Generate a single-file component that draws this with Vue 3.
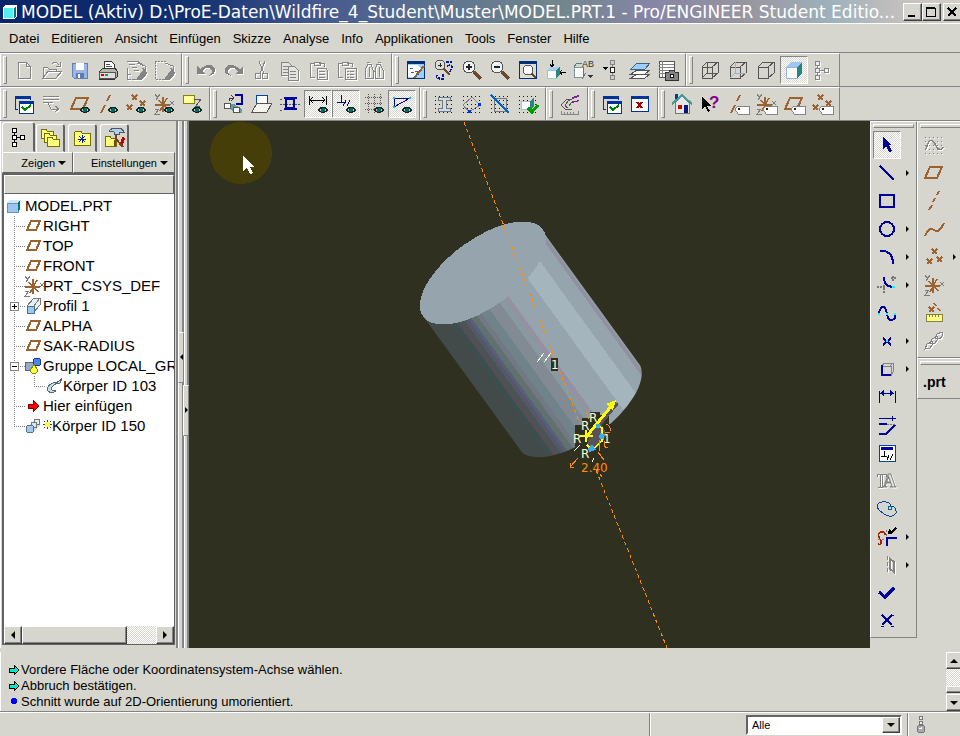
<script setup>

import { ref } from 'vue'

const filter = ref('Alle')

const menus = ['Datei', 'Editieren', 'Ansicht', 'Einfügen', 'Skizze', 'Analyse', 'Info', 'Applikationen', 'Tools', 'Fenster', 'Hilfe']

// parts shared by several icons
const eye = '<path d="M11 18q6-7 12 0q-6 6-12 0z" fill="#182020"/><path d="M13 18q4-3 8 0q-4 2-8 0z" fill="#a5cece"/><circle cx="17" cy="18" r="2" fill="#006b63"/>'
const tag = '<path d="M9 17l3-3h11v8H12z" fill="#fff" stroke="#848484"/><path d="M12 17h2" stroke="#222" stroke-width="2"/>'
const plane = '<path d="M3 17L8 6h12l-5 11z" stroke="#9c6331" stroke-width="2"/>'
const dash = '<path d="M5 21l4-8M11 9l3-6" stroke="#9c6331" stroke-width="2"/>'
const crosses = '<path d="M8 3l5 5m0-5l-5 5M3 13l5 5m0-5l-5 5M16 9l5 5m0-5l-5 5" stroke="#9c6331" stroke-width="1.5"/>'
const letters = '<g stroke="#7b7b7b"><path d="M3 2l3 4M8 2L4 8M18 9l4 4m0-4l-4 4M3 17h4l-4 5h5"/></g>'
const csys = '<path d="M3 13h15M11 5v15M7 8l9 10M15 6L8 19" stroke="#9c6331" stroke-width="1.5"/>' + letters
const dots = '<path d="M3 4h18M3 8h18M3 12h18M3 16h18M3 20h18" stroke="#00009c" stroke-dasharray="1 3"/>'
const cubeLines = '<path d="M4 9h10v11H4zM4 9l5-5h11v11l-6 5M14 9l6-5" stroke="#555"/>'
const win = '<path d="M3 4h15v4M3 4v13h3" stroke="#00319c"/><path d="M3 5h15" stroke="#00319c" stroke-width="3"/><path d="M7 9h14v12H7z" fill="#fff" stroke="#00319c"/><path d="M7 10h14" stroke="#00319c" stroke-width="3"/>'
const loupe = '<path d="M14 14l7 7" stroke="#6b4a29" stroke-width="3"/><circle cx="9" cy="9" r="6" fill="#eef4f4" stroke="#555"/>'
const pages = '<path d="M3 4h7l3 3v10H3zM5 8h5M5 11h5M5 14h5" fill="#e4e4de"/><path d="M10 8h6l4 4v10H10zM12 13h6M12 16h6M12 19h6" fill="#e4e4de"/>'
const eraser = '<path d="M15 18l5-6 3 3-5 6h-5z" fill="#848484"/><path d="M13 5l8 3v4l-3-2"/>'

const icons = {
    new: '<path d="M6 4h8l4 4v12H6zM14 4v4h4"/>',
    open: '<path d="M3 20V9h4l2 2h7v3M3 20l5-7h14l-6 7zM12 6q4-4 7 1m1-3v4h-4"/>',
    save: '<path d="M4 5h15v15H6l-2-2z" fill="#9cb5e7" stroke="#6384ad"/><path d="M8 5h8v7H8z" fill="#fff"/><path d="M8 15h8v5H8z" fill="#5a7bb5"/><path d="M10 16h2v4h-2z" fill="#fff"/>',
    print: '<path d="M8 11V3h7l3 3v5" fill="#fff" stroke="#333"/><path d="M10 6h4M10 8h6" stroke="#555"/><path d="M3 14l4-4h12l2 3v6l-2 2H3z" fill="#b5b5ad" stroke="#333"/><path d="M3 14h16v6H3z" fill="#dedede" stroke="#555"/><path d="M5 17h3" stroke="#c00" stroke-width="2"/><path d="M9 17h3" stroke="#393" stroke-width="2"/>',
    erase: '<path d="M3 3h10l6 4M5 6h6M8 9h5M10 12h5M3 10v11h4M8 21h5M3 16h4" />' + eraser,
    eraseAll: '<path d="M3 3h10v3M3 4v17h10" stroke-dasharray="2 1"/>' + eraser,
    undo: '<path d="M3 8v8h8l-3-3q6-6 10-1 1 3-3 6 9-3 5-9-5-5-14 2z" fill="#848484" stroke="none"/>',
    redo: '<path d="M21 8v8h-8l3-3Q10 7 6 12q-1 3 3 6-9-3-5-9 5-5 14 2z" fill="#848484" stroke="none"/>',
    cut: '<path d="M9 3l5 13M15 3l-5 13"/><circle cx="8" cy="18" r="3"/><circle cx="15" cy="18" r="3"/>',
    copy: pages,
    paste: '<path d="M9 5H4v14h5M13 5h5v4M8 4h6v3H8zM11 10h9l1 2v9H11zM13 13h6M13 16h6M13 19h6"/>',
    pasteSp: '<path d="M9 5H4v14h5M13 5h5v4M8 4h6v3H8zM11 10h11v11H11zM13 13h2m1 0h4M13 16h2m1 0h4M13 19h2m1 0h4"/>',
    find: '<path d="M3 20V12l3-6h3l2 6v8H3zM13 20v-8l2-6h3l3 6v8zM11 13h2M7 9v10M17 9v10M5 4h3M16 4h3"/>',
    redraw: '<path d="M3 3h17v17H3z" fill="#9cceff" stroke="#00317b"/><path d="M3 4h17" stroke="#00317b" stroke-width="3"/><path d="M4 7h9l4 4-6 8H4z" fill="#fff"/><path d="M20 8l-10 12" stroke="#9c6331" stroke-width="2"/><path d="M6 10h3m2 3h3M7 14h3m2 2h3" stroke="#2963b5"/>',
    spin: '<circle cx="8" cy="7" r="5" fill="#deded6" stroke="#555"/><path d="M8 5v4M6 7h4" stroke="#222"/><path d="M12 11l6 6" stroke="#6b4a29" stroke-width="2"/><path d="M14 4h6M15 8q4-2 5 1l-2 5M5 17q-2 4 3 3M11 16v5h-4" stroke="#0018a5" stroke-dasharray="3 1" stroke-width="1.5"/>',
    zoomIn: loupe + '<path d="M6 9h6M9 6v6" stroke="#222" stroke-width="2"/>',
    zoomOut: loupe + '<path d="M6 9h6" stroke="#222" stroke-width="2"/>',
    refit: '<path d="M3 3h17v17H3z" fill="#deded6" stroke="#00317b"/><path d="M3 4h17" stroke="#00317b" stroke-width="3"/><path d="M15 15l5 5" stroke="#6b4a29" stroke-width="2"/><circle cx="12" cy="12" r="5" fill="#fff" stroke="#555"/>',
    orient: '<path d="M8 2v6m-2-2l2 3 2-3" stroke="#000"/><path d="M3 12h9v8H3z" fill="#fff" stroke="#9cc"/><path d="M3 12l4-3h8l-3 3z" fill="#a5cef7"/><path d="M12 12l4-3v8l-4 3z" fill="#298484"/><path d="M16 14h6m-4-2l-2 2 2 3" stroke="#000"/>',
    views: '<path d="M2 9h9v10H2z" fill="#fff" stroke="#7b9c9c"/><path d="M2 9l3-4h5M11 9v10l3-4" stroke="#5a7b84"/><text x="10" y="9" font-family="Liberation Sans" font-size="9" fill="#333">AB</text><path d="M16 17h5l-3 3z" fill="#333"/>',
    manager: '<path d="M2 9h6l-3 3z" fill="#000"/><path d="M12 3v18" stroke="#848484"/><path d="M10 2h4v4h-4zM10 17h4v4h-4z" fill="#ccc" stroke="#848484"/><path d="M10 9h4v5h-4z" fill="#fff" stroke="#222"/>',
    layers: '<path d="M3 20l6-4h13l-5 4zM3 16l6-4h13l-5 4z" fill="#fff" stroke="#555"/><path d="M3 11l6-6h13l-5 6z" fill="#9cceff" stroke="#42637b"/>',
    camera: '<path d="M3 3h15v16H3z" fill="#fff" stroke="#555"/><path d="M3 6h15M3 9h15M3 12h15M3 15h15M6 3v16" stroke="#848484"/><path d="M9 14h4l1-2h4l1 2h3v8H9z" fill="#848484" stroke="#333"/><circle cx="16" cy="18" r="2" fill="#fff" stroke="#111"/>',
    wire: cubeLines + '<path d="M9 4v11l-5 5M9 15h11" stroke="#555"/>',
    hidden: cubeLines + '<path d="M9 4v11l-5 5M9 15h11" stroke="#9cb5c6"/>',
    noHidden: cubeLines,
    shaded: '<path d="M4 9h11v11H4z" fill="#fff" stroke="#9cb5d6"/><path d="M4 9l5-5h12l-6 5z" fill="#9cc6f7"/><path d="M15 9l5-5v11l-5 5z" fill="#298484"/>',
    treeGrey: '<path d="M7 6v13M7 12h8" stroke="#848484"/><path d="M5 3h4v4H5zM5 10h4v4H5zM5 17h4v4H5zM14 10h4v4h-4z" fill="#eee" stroke="#848484"/>',

    winCheck: win + '<path d="M10 15l3 3 6-5" stroke="#008400" stroke-width="2"/>',
    winCross: '<path d="M3 4h17v15H3z" fill="#fff" stroke="#00319c"/><path d="M3 5h17" stroke="#00319c" stroke-width="3"/><path d="M9 10l5 6m0-6l-5 6" stroke="#a50000" stroke-width="2"/>',
    lines: '<path d="M3 4h16M3 7h16M3 10h10M8 11l3 6h7M15 14l4 3-4 3"/>',
    planeEye: plane + eye,
    axisEye: dash + eye,
    pointEye: crosses + eye,
    csysEye: csys + eye,
    noteEye: '<path d="M3 3h11v8H3z" fill="#ffff9c" stroke="#848400"/><path d="M14 7h7l-5 7h4" stroke="#555"/>' + eye,
    sketchRef: '<path d="M13 3h7v9h-6" stroke="#00009c" stroke-width="2"/><path d="M7 9V6h5m-3-3l3 3-3 3" stroke="#333"/><path d="M5 12h7l8 5v4h-6l-9-6z" fill="#639c9c"/><path d="M2 11h6v5H2zM11 15h6v5h-6z" fill="#fff" stroke="#555"/>',
    sketchView: '<path d="M6 3h11v16H6z" fill="#fff" stroke="#00429c"/><path d="M2 20l5-9h15l-5 9z" fill="#f4f4ee" stroke="#555"/><path d="M6 11V3h11v8" stroke="#00429c"/>',
    section: '<path d="M2 12h20M2 7h3M2 18h3" stroke="#555" stroke-dasharray="2 1"/><path d="M8 7h8v9H8zM6 6h13M6 17h13" stroke="#00009c" stroke-width="2"/>',
    dimEye: '<path d="M3 4v9M20 4v9M4 8h15M7 5L4 8l3 3M16 5l3 3-3 3" stroke="#000"/>' + eye,
    constrEye: '<path d="M7 3v7M3 10h9" stroke="#00009c"/><path d="M12 8l-3 6M16 8l-3 6" stroke="#00009c"/>' + eye,
    gridEye: '<path d="M3 5h18M3 11h18M3 17h10M6 2v19M12 2v19M18 2v11" stroke="#555" stroke-dasharray="1 1"/>' + eye,
    vertEye: '<path d="M4 6h16L4 15z" stroke="#00009c"/><path d="M3 5h2v2H3zM19 5h2v2h-2zM3 14h2v2H3z" fill="#0cc"/>' + eye,
    iBeam: dots + '<path d="M6 5h12v3h-4v8h4v3H6v-3h4V8H6z" fill="#c6deef" stroke="#777"/>',
    diamond: dots + '<path d="M3 13l9-8 8 8-11 7z" stroke="#848484"/><path d="M8 18h3v3H8zM18 11h3v3h-3z" fill="#0039c6"/>',
    noGrid: dots + '<path d="M6 6h12v13H6z" stroke="#777"/><path d="M3 3l18 18" stroke="#0063c6" stroke-width="2"/>',
    cubeCheck: dots + '<path d="M5 9h9v8H5z" fill="#fff" stroke="#9cc"/><path d="M14 9l4-3v8l-4 4z" fill="#298484"/><path d="M12 16l4 4 6-7" stroke="#009c00" stroke-width="3"/>',
    analyse: '<path d="M21 4l-7 3-6 1-5 5 4 4h7M14 7l-4 2-3 5 3 2M20 9l-6 1-3 4" stroke="#555"/><path d="M14 6l7-3M14 11l7-3" stroke="#9c00c6"/><path d="M3 19v3h17v-3M6 20v2M9 20v2M12 20v2M15 20v2" stroke="#848484"/>',
    home: '<path d="M5 11v10h14V11l-7-7z" fill="#e7e7e7" stroke="#777"/><path d="M5 2h3v5H5z" fill="#004284"/><path d="M2 12l10-9 10 9" stroke="#429c9c" stroke-width="2"/><path d="M8 13h4v4H8z" fill="#c00"/><path d="M14 13h4v8h-4z" fill="#00187b"/>',
    help: '<path d="M4 4v13l3-3 3 6 2-1-3-5h4z" fill="#000"/><text x="11" y="16" font-family="Liberation Sans" font-weight="bold" font-size="17" fill="#840084">?</text>',
    axisTag: dash + tag,
    csysTag: csys + tag,
    planeTag: plane + tag,
    pointTag: crosses + tag,

    select: '<path d="M8 4v12l3-3 3 6 3-1-3-6h3z" fill="#00009c"/>',
    line: '<path d="M5 5l14 14" stroke="#00009c" stroke-width="2"/>',
    rect: '<path d="M5 6h14v12H5z" stroke="#00009c" stroke-width="2"/>',
    circle: '<circle cx="12" cy="12" r="7" stroke="#00009c" stroke-width="2"/>',
    arc: '<path d="M5 6q13-1 13 13" stroke="#00009c" stroke-width="2"/>',
    fillet: '<path d="M9 4q0 10 10 10" stroke="#00009c" stroke-width="2"/><path d="M2 14h9M9 12v9M16 5h5M18 3v5" stroke="#777" stroke-dasharray="2 1" stroke-width="2"/><path d="M17 13h3v2h-3z" fill="#0ff"/>',
    spline: '<path d="M4 13q1-7 4-7t4 7 5 6 3-6" stroke="#00009c" stroke-width="2"/><path d="M3 12h2v2H3zM11 12h2v2h-2zM19 12h2v2h-2z" fill="#0ff"/>',
    point: '<path d="M8 9l8 7m0-7l-8 7" stroke="#00009c" stroke-width="2"/><path d="M11 11h2v2h-2z" fill="#0ff"/>',
    edge: '<path d="M7 9l2-3h9v9l-2 3M15 9l3-3" stroke="#848484"/><path d="M7 9h9v9H7z" stroke="#848484"/><path d="M7 8v10h9" stroke="#00009c" stroke-width="2"/>',
    dim: '<path d="M4 6v12M20 6v12M5 8h14" stroke="#00009c"/><path d="M5 8l4-3v6zM19 8l-4-3v6z" fill="#00009c"/>',
    modify: '<path d="M4 5h17M17 3v5" stroke="#00009c"/><path d="M4 11h8M4 21h7l9-9" stroke="#00009c" stroke-width="2"/><path d="M12 11h8" stroke="#777" stroke-dasharray="2 1"/>',
    constrain: '<path d="M4 4h16v16H4z" fill="#fff" stroke="#0042a5"/><path d="M6 7h12" stroke="#00009c" stroke-width="3"/><path d="M9 10v5M6 15h6M14 14l-2 5M18 13l-3 6" stroke="#000"/>',
    text: '<path d="M2 5h9v3M2 5v3M5 5v13M7 5v13M3 18h5" stroke="#848484"/><text x="8" y="18" font-family="Liberation Serif" font-weight="bold" font-size="18" fill="#e8e8e2" stroke="#848484">A</text>',
    palette: '<path d="M7 5q8-1 9 4 5 1 5 5 1 3-4 5-4 1-8-2Q0 11 3 7q1-2 4-2z" stroke="#0042a5"/><circle cx="15" cy="11" r="2" stroke="#0063a5"/>',
    trim: '<path d="M3 19q4 2 3-3-5-7 0-9 4-1 4 3" stroke="#a52100" stroke-width="1.5"/><path d="M12 21v-8h10" stroke="#00009c" stroke-width="2"/><path d="M21 3l-6 6" stroke="#000" stroke-width="2"/><path d="M13 9l1-5 4 4z" fill="#000"/><path d="M3 14h8M11 5v8" stroke="#777" stroke-dasharray="2 2"/>',
    mirror: '<path d="M12 3v18" stroke-dasharray="4 2"/><path d="M15 6l4 3v10l-4-3z" stroke-width="2"/>',
    check: '<path d="M4 11l6 5 9-9" stroke="#00009c" stroke-width="3"/>',
    cross: '<path d="M7 6l10 10m0-10L7 16" stroke="#00009c" stroke-width="2"/><path d="M6 6h3M16 6h3M6 17h3M16 17h3" stroke="#00009c"/>',

    curveGrid: '<path d="M3 4h18M3 8h18M3 12h18M3 16h18M3 20h18" stroke-dasharray="1 3"/><path d="M4 16q4-14 9-5t8 3" stroke-width="1.5"/>',
    plane,
    axis: '<path d="M7 21l3-5M11 13l2-4M15 6l2-4" stroke="#9c6331" stroke-width="2"/>',
    curve: '<path d="M3 19q4-10 9-6t10-7" stroke="#9c6331" stroke-width="2"/>',
    points: '<path d="M10 4l5 5m0-5l-5 5M5 14l5 5m0-5l-5 5M15 12l5 5m0-5l-5 5" stroke="#9c6331" stroke-width="1.5"/>',
    csys,
    measure: '<path d="M12 2l2 3M7 6l5 5m0-5l-5 5M16 7l2 3" stroke="#9c6331" stroke-width="1.5"/><path d="M4 13h16v7H4z" fill="#ffff84" stroke="#848442"/><path d="M7 13v3M10 13v3M13 13v3M16 13v3" stroke="#848442"/>',
    chain: '<path d="M3 20l2-5 5-3 1 3-3 4zM8 14l2-4 5-3 1 3-3 4zM13 9l2-4 5-2 1 3-3 4z"/>',

    tabTree: '<path d="M8 6v13M8 12h8" stroke="#000"/><path d="M6 3h4v4H6zM6 10h4v4H6zM6 17h4v4H6zM14 10h4v4h-4z" fill="#fff" stroke="#000"/>',
    tabFolders: '<g fill="#ffff7b" stroke="#737300"><path d="M3 12V4l2-1h3l1 2h6v7z"/><path d="M6 16V8l2-1h3l1 2h6v7z"/><path d="M9 20v-8l2-1h3l1 2h6v7z"/></g>',
    tabFav: '<path d="M4 19V7l2-2h5l1 2h8v12z" fill="#ffff7b" stroke="#737300"/><path d="M12 9v8M8 13h8M9 10l6 6M15 10l-6 6" stroke="#0021a5"/>',
    tabTools: '<path d="M3 20v-9l2-1h3l1 2h5v8z" fill="#ffff7b" stroke="#737300"/><path d="M7 5l4-3h8l3 4h-5v2h-5V6z" fill="#b5cee7" stroke="#4a5a6b"/><path d="M14 8l-1 12M13 12l8 9" stroke="#7b4218" stroke-width="2"/><path d="M18 17l3-7 2 3-2 6z" fill="#c60000"/>',

    part: '<path d="M5 9h11v9H5z" fill="#9cc6ef" stroke="#6394bd"/><path d="M5 9l2-3h12l-3 3z" fill="#cee7ff"/><path d="M16 9l2-3v9l-2 3z" fill="#00737b"/>',
    treePlane: '<path d="M5 16L9 7h9l-4 9z" stroke="#9c6331" stroke-width="2"/>',
    extrude: '<path d="M5 12l7-8h6v7l-7 8" fill="#e7f3f7" stroke="#777"/><path d="M5 12h7v7H5z" fill="#9cc6ef" stroke="#42739c"/><path d="M12 12l6-8" stroke="#777"/>',
    group: '<path d="M3 8h9v8H3z" fill="#94adc6" stroke="#526b7b"/><circle cx="15" cy="8" r="4" fill="#5284e7" stroke="#18398c"/><path d="M12 10l4 7-2 2h-4l-2-2z" fill="#ffff42" stroke="#848400"/>',
    sweep: '<path d="M20 4q-3 5-9 5-7 3-5 8 3 3 8 0-6 0-4-4 3-4 8-4z" fill="#c6dee7" stroke="#526b73"/>',
    insert: '<path d="M6 10h5V6l6 6-6 6v-4H6z" fill="#f00" stroke="#840000"/>',
    blend: '<path d="M7 11l6-6h5v6l-6 7z" fill="#cedee7"/><circle cx="15" cy="8" r="3" fill="#deeff7" stroke="#777"/><circle cx="12" cy="11" r="3" fill="#cee7f7" stroke="#777"/><circle cx="8" cy="15" r="4" fill="#a5c6e7" stroke="#527394"/>'
}

const rows = [
    [
        ['new', 'open', 'save', 'print', 'erase', 'eraseAll'],
        ['undo', 'redo', 'cut', 'copy', 'paste', 'pasteSp', 'find'],
        ['redraw', 'spin', 'zoomIn', 'zoomOut', 'refit', 'orient', 'views', 'manager', 'layers', 'camera'],
        ['wire', 'hidden', 'noHidden', 'shaded', 'treeGrey']
    ],
    [
        ['winCheck', 'lines', 'planeEye', 'axisEye', 'pointEye', 'csysEye', 'noteEye'],
        ['sketchRef', 'sketchView', 'section', 'dimEye', 'constrEye', 'gridEye', 'vertEye'],
        ['iBeam', 'diamond', 'noGrid', 'cubeCheck'],
        ['analyse'],
        ['winCheck', 'winCross'],
        ['home', 'help', 'axisTag', 'csysTag', 'planeTag', 'pointTag']
    ]
]

const pressed = ['shaded', 'dimEye', 'constrEye', 'vertEye', 'select']
const disabled = ['new', 'open', 'erase', 'eraseAll', 'undo', 'redo', 'cut', 'copy', 'paste', 'pasteSp', 'find', 'treeGrey', 'lines', 'text', 'mirror', 'curveGrid', 'chain']

const sketchTools = ['select', 'line', 'rect', 'circle', 'arc', 'fillet', 'spline', 'point', 'edge', 'dim', 'modify', 'constrain', 'text', 'palette', 'trim', 'mirror', 'check', 'cross']
const datumTools = ['curveGrid', 'plane', 'axis', 'curve', 'points', 'csys', 'measure', 'chain']
const flyouts = ['line', 'circle', 'arc', 'fillet', 'point', 'edge', 'trim', 'mirror', 'points']

const tabs = ['tabTree', 'tabFolders', 'tabFav', 'tabTools']

const tree = [
    { icon: 'treePlane', name: 'RIGHT' },
    { icon: 'treePlane', name: 'TOP' },
    { icon: 'treePlane', name: 'FRONT' },
    { icon: 'csys', name: 'PRT_CSYS_DEF' },
    { icon: 'extrude', name: 'Profil 1', box: '+' },
    { icon: 'treePlane', name: 'ALPHA' },
    { icon: 'treePlane', name: 'SAK-RADIUS' },
    { icon: 'group', name: 'Gruppe LOCAL_GR', box: '-' },
    { icon: 'sweep', name: 'Körper ID 103', child: true },
    { icon: 'insert', name: 'Hier einfügen' },
    { icon: 'blend', name: 'Körper ID 150', star: true, last: true }
]

// bands of the shaded shell, measured across the cylinder
const bands = [
    [-75, 20, '#424a4a'], [-55, 5, '#3c4e4d'], [-50, 4, '#544e56'], [-46, 3, '#455653'],
    [-43, 4, '#58566a'], [-39, 3, '#566078'], [-36, 6, '#61716f'], [-30, 5, '#727884'],
    [-25, 9, '#70838a'], [-16, 12, '#828a93'], [-4, 6, '#8999a2'], [2, 5, '#9591a3'],
    [7, 26, '#96a5ad'], [33, 20, '#a5b5bd'], [53, 15, '#96a5ad'], [68, 3, '#918fa0'], [71, 3, '#8e9ca5']
]

</script>

<template>
    <div class="app">
        <header class="title">
            <svg class="logo" viewBox="0 0 16 16"><path d="M1 3l3-2h11v11l-3 3H1z" fill="#fff" /><path d="M2 4h9v10H2z" fill="#5ee" /><path d="M12 4l2-2v10l-2 2z" fill="#077" /></svg>
            <h1>MODEL (Aktiv) D:\ProE-Daten\Wildfire_4_Student\Muster\MODEL.PRT.1 - Pro/ENGINEER Student Editio...</h1>
            <button class="cap" aria-label="Minimieren"><svg viewBox="0 0 16 14"><path d="M4 11h7" stroke="#000" stroke-width="2" /></svg></button>
            <button class="cap" aria-label="Maximieren"><svg viewBox="0 0 16 14"><path d="M3 3h9v8H3zM3 2h9" stroke="#000" /></svg></button>
            <button class="cap close" aria-label="Schließen"><svg viewBox="0 0 16 14"><path d="M4 3l8 8m0-8l-8 8" stroke="#000" stroke-width="2" /></svg></button>
        </header>

        <nav class="menu">
            <button v-for="m in menus" :key="m">{{ m }}</button>
        </nav>

        <div v-for="(row, r) in rows" :key="r" class="bar">
            <div v-for="(group, g) in row" :key="g" class="group">
                <span class="grip"></span>
                <button v-for="name in group" :key="name" class="tool" :class="{ pressed: pressed.includes(name), off: disabled.includes(name) }" :aria-label="name">
                    <svg viewBox="0 0 24 24" v-html="icons[name]"></svg>
                </button>
            </div>
        </div>

        <main class="work">
            <aside class="side">
                <div class="tabs">
                    <button v-for="(t, i) in tabs" :key="t" class="tab" :class="{ active: i == 0 }" :aria-label="t">
                        <svg viewBox="0 0 24 24" v-html="icons[t]"></svg>
                    </button>
                </div>
                <div class="drops">
                    <button class="show">Zeigen <i class="down"></i></button>
                    <button class="settings">Einstellungen <i class="down"></i></button>
                </div>
                <div class="panel">
                    <div class="head"></div>
                    <ul class="tree">
                        <li class="root"><svg viewBox="0 0 24 24" v-html="icons.part"></svg><span>MODEL.PRT</span></li>
                        <li v-for="n in tree" :key="n.name">
                            <span class="guide" :class="{ through: n.child, last: n.last }">
                                <b v-if="n.box" class="box" :class="{ plus: n.box == '+' }"></b>
                            </span>
                            <span v-if="n.child" class="guide sub"></span>
                            <svg viewBox="0 0 24 24" v-html="icons[n.icon]"></svg>
                            <svg v-if="n.star" class="star" viewBox="0 0 9 20"><path d="M4 4v9M0 8h9M1 5l7 7M8 5l-7 7" stroke="#444" /><path d="M2 6h5v5H2z" fill="#ff4" /></svg>
                            <span>{{ n.name }}</span>
                        </li>
                    </ul>
                    <div class="hscroll">
                        <button aria-label="links"><i class="left"></i></button>
                        <span class="thumb"></span>
                        <span class="space"></span>
                        <button aria-label="rechts"><i class="right"></i></button>
                    </div>
                </div>
            </aside>

            <div class="split">
                <span class="sash"></span>
                <span class="sash"></span>
                <button class="knob" aria-label="zuklappen"><i class="left"></i></button>
                <button class="knob second" aria-label="aufklappen"><i class="right"></i></button>
            </div>

            <section class="view">
                <svg viewBox="189 121 681 527" preserveAspectRatio="xMidYMid slice">
                    <defs>
                        <clipPath id="shell"><path d="M-74 0V168A74 34 0 0 0 73 167L73 0z" /></clipPath>
                    </defs>
                    <g transform="translate(483 273) rotate(-36)">
                        <g clip-path="url(#shell)">
                            <rect v-for="b in bands" :key="b[0]" :x="b[0]" y="-10" :width="b[1]" height="220" :fill="b[2]" />
                        </g>
                        <ellipse rx="74" ry="34" fill="#96a5ad" />
                    </g>

                    <path d="M464 122L580 424M596 470L667 648" stroke="#ff8c00" stroke-dasharray="4 3" />
                    <path d="M537 362l7-9M544 362l7-9" stroke="#ffffce" />
                    <path d="M551 358h7v13h-7z" fill="#303021" />
                    <text class="mark" x="551" y="369">1</text>

                    <path d="M575 425h7v-7h8v-6h10v3h9v9h10v11l-6 18-14 8-20-3-4-8z" fill="#303021" />
                    <path d="M617 403l-28 34" stroke="#5a525a" stroke-width="4" />
                    <path d="M588 440l4-7 10-8 5 10-7 9-7 8-6-6z" fill="#5a525a" />
                    <path d="M586 437l27-33" stroke="#ff0" stroke-width="3" />
                    <path d="M616 400l-10 4 7 6z" fill="#ff0" />
                    <path d="M580 436h13M586 430v12M587 445l5 5 10-9v-13l-6-4" stroke="#ff0" stroke-width="1.5" />
                    <path d="M588 448l4-4 4 6-7 2zM600 433l4 1v6l-5-2zM596 424h4v4h-4z" fill="#39adef" />
                    <g class="mark">
                        <text x="589" y="422">R</text>
                        <text x="581" y="430">R</text>
                        <text x="573" y="443">R</text>
                        <text x="581" y="458">R</text>
                        <text x="603" y="443">1</text>
                    </g>
                    <path d="M574 451l6-6M592 462l2-4" stroke="#ffffce" />
                    <path d="M578 458l-8 9M570 463v4h4M586 412l3 7M600 440l-1 11M598 452l6 8M606 425q5-1 4 7-2 2-5 0M604 441q0 8 4 6M600 474l2 3" stroke="#ff8c00" />
                    <text class="value" x="581" y="472">2.40</text>

                    <circle cx="241" cy="153" r="31" fill="#463e08" />
                    <path d="M243 155v16l4-3 3 6 3-1-3-6h4z" fill="#fff" />
                </svg>
            </section>

            <div class="column">
                <span class="hgrip"></span>
                <div v-for="name in sketchTools" :key="name" class="cell">
                    <button class="tool" :class="{ pressed: pressed.includes(name), off: disabled.includes(name) }" :aria-label="name">
                        <svg viewBox="0 0 24 24" v-html="icons[name]"></svg>
                    </button>
                    <i v-if="flyouts.includes(name)" class="fly"></i>
                </div>
            </div>

            <div class="far">
                <div class="column wide">
                    <span class="hgrip"></span>
                    <div v-for="name in datumTools" :key="name" class="cell">
                        <button class="tool" :class="{ off: disabled.includes(name) }" :aria-label="name">
                            <svg viewBox="0 0 24 24" v-html="icons[name]"></svg>
                        </button>
                        <i v-if="flyouts.includes(name)" class="fly"></i>
                    </div>
                </div>
                <div class="column wide">
                    <span class="hgrip"></span>
                    <strong class="prt">.prt</strong>
                </div>
            </div>
        </main>

        <section class="log">
            <ul>
                <li><svg viewBox="0 0 12 12"><path d="M1 4h5V1l5 5-5 5V8H1z" fill="#0ec" stroke="#000" /></svg>Vordere Fläche oder Koordinatensystem-Achse wählen.</li>
                <li><svg viewBox="0 0 12 12"><path d="M1 4h5V1l5 5-5 5V8H1z" fill="#0ec" stroke="#000" /></svg>Abbruch bestätigen.</li>
                <li><svg viewBox="0 0 12 12"><circle cx="6" cy="5" r="3" fill="#00f" /></svg>Schnitt wurde auf 2D-Orientierung umorientiert.</li>
            </ul>
            <div class="vscroll">
                <button aria-label="hoch"><i class="up"></i></button>
                <span class="space"></span>
                <span class="thumb"></span>
                <button aria-label="runter"><i class="down"></i></button>
            </div>
        </section>

        <footer class="status">
            <div class="filter">
                <select v-model="filter" aria-label="Filter">
                    <option>Alle</option>
                </select>
                <span class="arrow"><i class="down"></i></span>
            </div>
            <div class="light">
                <svg viewBox="0 0 12 20"><g stroke="#777"><circle cx="6" cy="3" r="2" fill="#eee" /><circle cx="6" cy="8" r="2" fill="#eee" /><circle cx="6" cy="14" r="4" fill="#aaa" /></g><path d="M4 13h2v-1" stroke="#fff" /></svg>
            </div>
        </footer>
    </div>
</template>

<style>
body {
    background: #d6d6ce;
}
</style>

<style scoped>
.app {
    display: flex;
    flex-direction: column;
    min-height: 100vh;
    overflow: hidden;
    box-sizing: border-box;
    background: #d6d6ce;
    color: #000;
    font-family: "Liberation Sans", Arial, sans-serif;
    font-size: 13px;
}

.app * {
    box-sizing: border-box;
}

button {
    font: inherit;
    color: inherit;
    margin: 0;
    padding: 0;
    background: #d6d6ce;
    border: 0;
}

ul {
    list-style: none;
    margin: 0;
    padding: 0;
}

svg {
    display: block;
    fill: none;
    shape-rendering: crispEdges;
}

/* little triangles */
.down, .up, .left, .right, .fly {
    display: inline-block;
    flex: none;
    width: 0;
    height: 0;
    border: 4px solid transparent;
}

.down {
    border-top-color: #000;
    border-bottom: 0;
}

.up {
    border-bottom-color: #000;
    border-top: 0;
}

.left {
    border-right-color: #000;
    border-left: 0;
}

.right, .fly {
    border-left-color: #000;
    border-right: 0;
}

.title {
    display: flex;
    align-items: center;
    height: 24px;
    padding: 1px 0;
    border-bottom: 1px solid #fff;
    background: linear-gradient(90deg, #0a246a, #10306e 20%, #45588e 33%, #5c7290 45%, #72868c 58%, #8685a6 68%, #98969e 78%, #9fb2bd 87%, #bcbcbc 92%, #d6cec6 100%);
}

.logo {
    flex: none;
    width: 16px;
    height: 16px;
    margin: 0 3px 0 2px;
}

.title h1 {
    flex: 1;
    min-width: 0;
    margin: 0;
    overflow: hidden;
    white-space: nowrap;
    color: #fff;
    font-family: "DejaVu Sans", Verdana, sans-serif;
    font-size: 17px;
    font-weight: normal;
    line-height: 22px;
}

.cap {
    flex: none;
    width: 19px;
    height: 18px;
    border: 1px solid;
    border-color: #fff #404040 #404040 #fff;
    box-shadow: inset -1px -1px #848484;
}

.cap.close {
    margin: 0 -2px 0 2px;
}

.cap svg {
    width: 16px;
    height: 14px;
}

.menu {
    display: flex;
    align-items: center;
    gap: 12px;
    height: 28px;
    padding: 0 9px;
}

.bar {
    display: flex;
    height: 34px;
    border-top: 1px solid #848484;
}

.group {
    display: flex;
    align-items: center;
    padding: 0 3px 0 2px;
    border: solid;
    border-color: #fff #848484 #fff #fff;
    border-width: 1px 1px 0 1px;
}

.grip {
    width: 4px;
    height: 28px;
    margin-right: 3px;
    background: #d6d6ce;
    border: 1px solid;
    border-color: #fff #848484 #848484 #fff;
}

.tool {
    display: flex;
    flex: none;
    align-items: center;
    justify-content: center;
    width: 28px;
    height: 28px;
    border: 1px solid transparent;
}

.tool svg {
    flex: none;
    width: 24px;
    height: 24px;
}

.pressed {
    border-color: #848484 #fff #fff #848484;
}

.pressed, .space {
    background: conic-gradient(#fff 25%, #d6d6ce 0 50%, #fff 0 75%, #d6d6ce 0) 0 0 / 2px 2px;
}

.off svg {
    stroke: #848484;
    filter: drop-shadow(1px 1px 0 #fff);
}

.work {
    display: flex;
    flex: 1;
    min-height: 0;
    border-top: 1px solid #848484;
}

.side {
    display: flex;
    flex-direction: column;
    flex: none;
    width: 178px;
    padding: 1px 1px 0;
    border-left: 1px solid #fff;
    border-right: 2px solid #848484;
}

.tabs {
    display: flex;
    align-items: flex-end;
    gap: 3px;
    height: 30px;
}

.tab {
    display: flex;
    align-items: center;
    justify-content: center;
    width: 29px;
    height: 28px;
    border: 1px solid;
    border-color: #fff #636363 transparent #fff;
    border-right-width: 2px;
    border-radius: 3px 3px 0 0;
}

.tab.active {
    width: 33px;
    height: 30px;
    margin-right: -2px;
}

.tab svg {
    flex: none;
    width: 24px;
    height: 24px;
}

.drops {
    display: flex;
    height: 21px;
    font-size: 11px;
}

.drops button {
    display: flex;
    align-items: center;
    justify-content: flex-end;
    gap: 3px;
    padding-right: 6px;
    border: 1px solid;
    border-color: #fff #636363 #636363 #fff;
}

.drops .show {
    width: 71px;
}

.drops .settings {
    flex: 1;
}

.panel {
    display: flex;
    flex-direction: column;
    flex: 1;
    min-height: 0;
    margin-bottom: 3px;
    border: solid #636363;
    border-width: 2px 1px 1px 2px;
    background: #fff;
}

.head {
    height: 19px;
    background: #d6d6ce;
    border: 1px solid;
    border-color: #fff #636363 #636363 #fff;
}

.tree {
    flex: 1;
    padding-top: 2px;
    overflow: hidden;
    font-size: 15px;
}

.tree li {
    display: flex;
    align-items: center;
    height: 20px;
    line-height: 20px;
    white-space: nowrap;
}

.tree svg {
    flex: none;
    width: 24px;
    height: 24px;
    margin: 0 -3px 0 -4px;
}

.tree .root svg {
    margin: 0 -1px 0 -2px;
}

.tree .star {
    width: 9px;
    height: 20px;
    margin: 0;
}

.guide {
    position: relative;
    flex: none;
    width: 22px;
    height: 20px;
    background:
        repeating-linear-gradient(180deg, #848484 0 1px, transparent 1px 2px) 10px 0 / 1px 100% no-repeat,
        repeating-linear-gradient(90deg, #848484 0 1px, transparent 1px 2px) 10px 10px / 12px 1px no-repeat;
}

.guide.through {
    width: 20px;
    background-size: 1px 100%, 0 0;
}

.guide.sub, .guide.last {
    background-size: 1px 10px, 12px 1px;
}

.box {
    position: absolute;
    top: 6px;
    left: 6px;
    width: 9px;
    height: 9px;
    border: 1px solid #848484;
    background: linear-gradient(#000, #000) 1px 3px / 5px 1px no-repeat #fff;
}

.box.plus {
    background:
        linear-gradient(#000, #000) 1px 3px / 5px 1px no-repeat,
        linear-gradient(#000, #000) 3px 1px / 1px 5px no-repeat #fff;
}

.hscroll {
    display: flex;
    height: 18px;
}

.hscroll button, .vscroll button, .thumb, .arrow {
    display: flex;
    flex: none;
    align-items: center;
    justify-content: center;
    width: 18px;
    background: #d6d6ce;
    border: 1px solid;
    border-color: #fff #404040 #404040 #fff;
    box-shadow: inset -1px -1px #848484;
}

.hscroll .thumb {
    width: 62%;
}

.hscroll .space {
    flex: 1;
}

.split {
    position: relative;
    display: flex;
    flex: none;
    width: 11px;
}

.sash {
    flex: 1;
    border-left: 1px solid #fff;
    border-right: 2px solid #848484;
}

.knob {
    position: absolute;
    top: 40%;
    left: 0;
    display: flex;
    align-items: center;
    justify-content: center;
    width: 6px;
    height: 51px;
    border: 1px solid;
    border-color: #fff #848484 #848484 #fff;
}

.knob.second {
    top: 50%;
    left: 5px;
}

.knob i {
    border-width: 3px;
}

.knob .left {
    border-left-width: 0;
}

.knob .right {
    border-right-width: 0;
}

.view {
    flex: 1;
    min-width: 0;
    min-height: 0;
    background: #303021;
}

.view > svg {
    width: 100%;
    height: 100%;
}

.mark {
    fill: #ffffce;
    font-family: "DejaVu Sans", sans-serif;
    font-size: 12px;
}

.value {
    fill: #ff8c00;
    font-family: "DejaVu Sans", sans-serif;
    font-size: 12px;
}

.column {
    display: flex;
    flex-direction: column;
    flex: none;
    align-self: flex-start;
    width: 47px;
    padding: 2px 2px;
    border: 1px solid;
    border-color: #fff #848484 #848484 #fff;
}

.hgrip {
    height: 4px;
    margin-bottom: 3px;
    border: 1px solid;
    border-color: #fff #848484 #848484 #fff;
}

.cell {
    display: flex;
    align-items: center;
    gap: 5px;
    height: 28px;
}

.fly {
    border-width: 3px;
    border-right-width: 0;
}

.far {
    flex: none;
    width: 43px;
    overflow: hidden;
}

.column.wide {
    width: 50px;
}

.prt {
    height: 28px;
    padding-left: 3px;
    font-size: 14px;
    line-height: 28px;
}

.log {
    display: flex;
    justify-content: space-between;
    height: 64px;
    padding-top: 4px;
    border-bottom: 1px solid #848484;
}

.log ul {
    padding: 10px 0 0 7px;
    border-left: 1px solid #fff;
}

.log li {
    display: flex;
    align-items: center;
    gap: 1px;
    height: 16px;
    line-height: 16px;
}

.log li svg {
    width: 12px;
    height: 12px;
}

.vscroll {
    display: flex;
    flex-direction: column;
    width: 14px;
}

.vscroll button {
    width: 16px;
    height: 17px;
}

.vscroll .space {
    flex: 1;
}

.vscroll .thumb {
    width: 16px;
    height: 7px;
    margin-bottom: 1px;
}

.status {
    display: flex;
    justify-content: flex-end;
    height: 24px;
    border-top: 1px solid #fff;
}

.filter {
    display: flex;
    position: relative;
    width: 259px;
    padding: 2px 5px 2px 96px;
    border-left: 1px solid #848484;
    border-right: 1px solid #848484;
    box-shadow: inset 1px 0 #fff;
}

.filter select {
    flex: 1;
    height: 20px;
    padding: 0 4px;
    appearance: none;
    background: #fff;
    border: 2px solid;
    border-color: #636363 #fff #fff #636363;
    border-radius: 0;
    color: #000;
    font: 11px "Liberation Sans", Arial, sans-serif;
}

.arrow {
    position: absolute;
    top: 4px;
    right: 7px;
    height: 16px;
    pointer-events: none;
}

.light {
    width: 52px;
    padding: 2px 6px;
    border-left: 1px solid #fff;
}

.light svg {
    width: 12px;
    height: 20px;
}
</style>
